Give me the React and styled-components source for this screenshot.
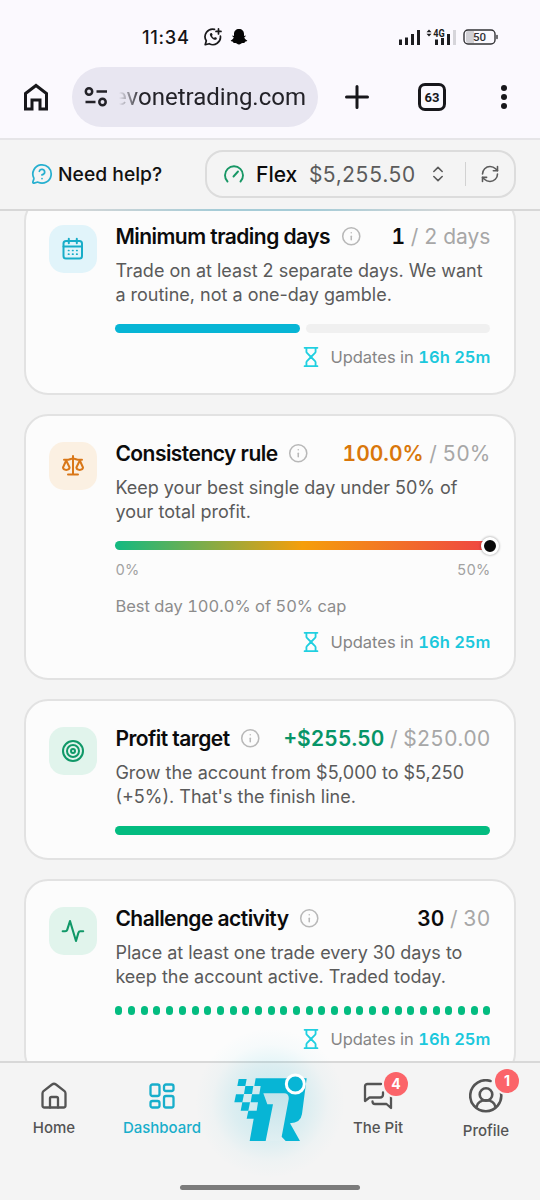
import React from 'react';
import styled, { createGlobalStyle } from 'styled-components';
import { ChevronsUpDown, RefreshCw, Info, Hourglass, MessageCircleQuestionMark } from 'lucide-react';

const Global = createGlobalStyle`
  * { box-sizing: border-box; }
  body { margin: 0; background: #f4f4f4; font-family: Inter, "Liberation Sans", sans-serif; color: #09090b; }
  svg { display: block; flex: none; }
`;

const Screen = styled.div`
  width: 540px; height: 1200px; display: flex; flex-direction: column;
  overflow: hidden; background: #f4f4f4;
`;

/* Phone status bar and browser toolbar */
const BrowserChrome = styled.div`
  height: 140px; flex: none; background: #fbf9fe; border-bottom: 2px solid #e6e5e8;
`;
const StatusBar = styled.div`
  height: 67px; padding: 6px 42px 0 142px; display: flex; align-items: center;
`;
const Clock = styled.span`
  font-size: 18.3px; font-weight: 450; letter-spacing: 0.7px; width: 62px; color: #151517;
`;
const StatusIcons = styled.div`display: flex; gap: 8px; align-items: center;`;
const Signals = styled.div`margin-left: auto; display: flex; align-items: center; gap: 1px;`;
const Toolbar = styled.div`
  height: 60px; display: flex; align-items: center; padding: 0 32px 0 23px;
`;
const AddressBar = styled.div`
  width: 246px; height: 60px; margin-left: 23px; padding-left: 12px; border-radius: 30px;
  background: #e8e6f1; display: flex; align-items: center; gap: 5px;
`;
const Address = styled.span`
  width: 193px; flex: none; display: flex; justify-content: flex-end; white-space: nowrap;
  font: 400 24px/36px Roboto, sans-serif; color: #232228;
  -webkit-mask-image: linear-gradient(90deg, transparent 6px, #000 28px);
  mask-image: linear-gradient(90deg, transparent 6px, #000 28px);
`;
const Tabs = styled.div`
  width: 28px; height: 28px; margin-left: 48px; border: 3px solid #17171b; border-radius: 7px;
  display: grid; place-items: center; font: 700 13px/1 Roboto, sans-serif; color: #17171b;
`;
const MenuDots = styled.div`
  margin-left: auto; display: grid; gap: 3px; padding-right: 1px;
  i { width: 6px; height: 6px; border-radius: 50%; background: #17171b; }
`;

/* App header */
const Header = styled.header`
  height: 71px; flex: none; display: flex; align-items: center; padding: 0 24px 1px 31px;
  background: #f4f4f4; position: relative;
  border-bottom: 2px solid; border-image: linear-gradient(90deg, #d7d7d7 12%, #a6ccd7 40%, #a6ccd7 58%, #d7d7d7 85%) 1;
`;
const Help = styled.div`
  display: flex; align-items: center; gap: 5px; font-size: 19.3px; font-weight: 500; color: #111;
`;
const AccountPill = styled.div`
  width: 311px; height: 48px; margin-left: auto; padding: 0 14px 0 16px;
  border: 2px solid #dcdcdc; border-radius: 18px; display: flex; align-items: center;
  font-size: 21px; color: #5b5b5b;
`;
const AccountName = styled.span`width: 41px; font-weight: 500; color: #0b0b0c; margin: 0 12px 0 11px;`;
const Balance = styled.span`
  width: 106px; font-variant-numeric: tabular-nums; margin-right: 13px;
`;
const Divider = styled.span`width: 1px; height: 24px; flex: none; background: #d2d2d2; margin: 0 14px 0 17px;`;

/* Rule cards */
const Main = styled.main`height: 850px; flex: none; overflow: hidden;`;
const CardList = styled.div`
  margin-top: -14px; padding: 0 24px; display: flex; flex-direction: column; gap: 19px;
`;
const Card = styled.section`
  display: flex; gap: 18px; padding: 23px 23.6px 23px 23.4px; border: 2px solid #e2e2e2; border-radius: 24px;
  background: #fcfcfc;
`;
const IconTile = styled.div`
  width: 48px; height: 48px; margin-top: 3px; flex: none; border-radius: 15px;
  display: grid; place-items: center; background: ${p => p.$bg}; color: ${p => p.$fg};
`;
const Body = styled.div`flex: 1; min-width: 0;`;
const Head = styled.div`height: 28px; display: flex; align-items: center; white-space: nowrap;`;
const Title = styled.h2`
  margin: 0 10.6px 0 0; font-size: 21px; font-weight: 600; letter-spacing: -0.535px; color: #0b0b0c;
`;
const Value = styled.div`
  margin-left: auto; font-size: 21px; font-variant-numeric: tabular-nums; color: #a7a7a7;
  b { font-weight: 600; color: ${p => p.$color}; }
`;
const Description = styled.p`
  margin: 9px 0 0; font-size: 18px; line-height: 24px; color: #5a5a5a; white-space: pre-line;
`;
const Track = styled.div`
  height: 9px; margin-top: 17px; display: flex; gap: 6px;
`;
const Segment = styled.span`flex: 1; border-radius: 5px; background: ${p => p.$color};`;
const Dots = styled(Track)`
  gap: 0; justify-content: space-between;
  i { width: 7px; border-radius: 3.5px; background: #03bc80; }
`;
const Gradient = styled(Track)`
  border-radius: 5px; justify-content: flex-end; align-items: center;
  background: linear-gradient(90deg, #12b981, #f59e0b 50%, #ef4444);
`;
const Knob = styled.span`
  width: 18px; height: 18px; margin-right: -9px; flex: none; border: 3px solid #fff; border-radius: 50%;
  background: #0a0a0a; box-shadow: 0 0 2px 1px rgba(0,0,0,.2);
`;
const Scale = styled.div`
  margin-top: 9px; height: 22px; padding-bottom: 2px; display: flex; justify-content: space-between; align-items: center;
  font-size: 14.5px; color: #a2a2a2; font-variant-numeric: tabular-nums; letter-spacing: 0.1px;
`;
const Note = styled.div`
  margin-top: 15px; height: 20px; padding-bottom: 1px; display: flex; align-items: center;
  font-size: 16.5px; color: #8c8c8c; font-variant-numeric: tabular-nums;
`;
const Updates = styled.div`
  margin-top: ${p => p.$gap || 12}px; height: 25px; padding-bottom: 2px; display: flex; align-items: center; justify-content: flex-end;
  font-size: 16.5px; color: #858585; white-space: pre; font-variant-numeric: tabular-nums;
  svg { margin: 1px 8px 0 0; color: #20cfe0; }
  b { font-weight: 600; color: #1bc8dc; }
`;

/* Bottom navigation */
const Nav = styled.nav`
  height: 139px; flex: none; position: relative; border-top: 2px solid #d8d8d8;
  background: #f4f4f4;
`;
const NavRow = styled.div`display: grid; grid-template-columns: repeat(5, 108px); position: relative;`;
const NavItem = styled.div`
  display: flex; flex-direction: column; align-items: center; padding-top: ${p => p.$top || 19}px; gap: 7px;
  font-size: 15px; line-height: 22px; font-weight: 500; color: ${p => p.$active ? '#18aecb' : '#545454'};
`;
const NavIcon = styled.div`position: relative;`;
const Badge = styled.span`
  position: absolute; left: ${p => p.$x}px; top: ${p => p.$y}px; width: 24px; height: 24px; border-radius: 50%;
  display: grid; place-items: center; background: #fb6469; color: #fff; font-size: 14px; font-weight: 700; line-height: 1;
  box-shadow: 0 0 0 2px #f4f4f4;
`;
const LogoButton = styled.div`
  position: absolute; left: 210px; top: -23px; width: 130px; height: 120px;
`;
const Glow = styled.div`
  position: absolute; left: 195px; top: -35px; width: 150px; height: 150px; border-radius: 50%;
  background: radial-gradient(closest-side, rgba(8,182,214,.2), rgba(8,182,214,.1) 50%, rgba(8,182,214,.025) 78%, transparent);
`;
const HomeBar = styled.div`
  width: 180px; height: 5px; border-radius: 3px; background: #7b7b7b;
  position: absolute; left: 180px; bottom: 10px;
`;

const Svg = ({ w = 24, h = w, sw = 1.8, children, ...rest }) => (
  <svg width={w} height={h} viewBox={`0 0 ${w} ${h}`} fill="none" stroke="currentColor" strokeWidth={sw}
    strokeLinecap="round" strokeLinejoin="round" {...rest}>{children}</svg>
);

const CalendarIcon = () => (
  <Svg sw={2}><rect x="2.5" y="4" width="18.5" height="17.5" rx="2.5" /><path d="M2.500 9.500h18.500M7.800 1.700v4.500M15.800 1.700v4.500" />
    <path d="M7.500 13.500h.4M11.600 13.500h.4M15.700 13.500h.4M7.500 17.200h.4M11.600 17.200h.4M15.700 17.200h.4" strokeWidth="1.700" /></Svg>
);
const ScalesIcon = () => (
  <Svg sw={2}><path d="M12 2v18M7 20.500h10M3 5.800h3c2 0 4-1.200 6-1.200s4 1.200 6 1.200h3" />
    <path d="M5.200 6.500 2 13.500c.3 3.200 6.300 3.200 6.600 0zM18.800 6.500 15.400 13.500c.3 3.200 6.300 3.200 6.600 0z" /></Svg>
);
const TargetIcon = () => (
  <Svg sw={2}><circle cx="12" cy="12" r="10" /><circle cx="12" cy="12" r="6" /><circle cx="12" cy="12" r="2" /></Svg>
);
const PulseIcon = () => (
  <Svg sw={2.1}><path d="M1.700 12.300h2.500c1.200 0 1.700-.4 2-1.400L9 2l6 20 2.400-8.300c.3-1 .9-1.400 1.900-1.400h2.900" /></Svg>
);

const InfoIcon = () => <Info size={20.5} strokeWidth={1.8} color="#b8b8b8" />;
const Countdown = ({ gap }) => (
  <Updates $gap={gap}><Hourglass size={22} strokeWidth={2} /><span>Updates in </span><b>16h 25m</b></Updates>
);

function Rule({ icon, bg, fg, title, value, total, color, text, children }) {
  return (
    <Card>
      <IconTile $bg={bg} $fg={fg}>{icon}</IconTile>
      <Body>
        <Head><Title>{title}</Title><InfoIcon /><Value $color={color}><b>{value}</b> / {total}</Value></Head>
        <Description>{text}</Description>
        {children}
      </Body>
    </Card>
  );
}

export default function App() {
  return (
    <Screen>
      <Global />
      <BrowserChrome>
        <StatusBar>
          <Clock>11:34</Clock>
          <StatusIcons>
            <Svg w={18} sw={1.7} color="#19191b">
              <path d="M10.500 1.300A7.600 7.600 0 0 0 2.300 12.800L1.200 16.700l4-1A7.600 7.600 0 0 0 16.400 8" />
              <path d="M6 5.500c-1 2.500 3.600 7.200 6.200 6.200l.8-1.700-2-1-1 .9c-1-.5-1.700-1.200-2.100-2.100l.8-.9-.9-2z" fill="currentColor" stroke="none" />
              <path d="M14.500.9v5M12 3.400h5" />
            </Svg>
            <Svg w={18} h={18} color="#050505">
              <path fill="currentColor" stroke="none" d="M9 1C6 1 4 3 4 6v2L2.500 7.600c-.8.4.2 1.300 1.200 1.700C3.300 11 2 12 .8 12.500c-.3.8 1.200 1.100 2.200 1.300.3 1.200.8 1.300 2.500 1.100C6.700 15 7.400 16.500 9 16.500s2.300-1.500 3.500-1.600c1.700.2 2.200.1 2.500-1.100 1-.2 2.500-.5 2.200-1.300C16 12 14.700 11 14.300 9.300c1-.4 2-1.300 1.200-1.700L14 8V6c0-3-2-5-5-5z" />
            </Svg>
          </StatusIcons>
          <Signals>
            <Svg w={64} h={20} color="#1d1d20">
              <g stroke="none" fill="currentColor">
                <path d="M1 12.500h3v5.500H1zM7 10.500h3V18H7zM13 7h3v11h-3zM19 3h3v15h-3z" />
                <path d="M28.500 5.200l2.500-2.800 2.500 2.800zM28.500 6.800h5l-2.500 2.800z" />
                <path d="M37 12.500h3V18h-3zM43 11h3v7h-3zM49 7h3v11h-3z" />
                <path d="M55 3h3v15h-3z" fill="#d6d5da" />
                <text x="35.300" y="10" fontFamily="Roboto" fontSize="10.500" fontWeight="700" textLength="11.500" lengthAdjust="spacingAndGlyphs">4G</text>
              </g>
            </Svg>
            <Svg w={35} h={18} sw={1.4} color="#333336">
              <path d="M5 3h6v12H5a2 2 0 0 1-2-2V5a2 2 0 0 1 2-2z" fill="#d1d0d5" stroke="none" />
              <rect x="1" y="2" width="31" height="14" rx="4" /><path d="M34 7.500v3" />
              <text x="16.500" y="13" textAnchor="middle" fontFamily="Roboto" fontSize="11.500" fontWeight="500" fill="#333336" stroke="none">50</text>
            </Svg>
          </Signals>
        </StatusBar>
        <Toolbar>
          <Svg w={26} h={28} sw={3} color="#17171b" strokeLinejoin="miter"><path d="M2.500 10.500 13 2.500l10.500 8V26H17v-9H9v9H2.500z" /></Svg>
          <AddressBar>
            <Svg w={24} h={22} sw={2.5} color="#232228" strokeLinecap="butt">
              <circle cx="5" cy="5.500" r="3.200" /><path d="M12.500 5.500H23M1.500 16h10" /><circle cx="18.500" cy="16" r="3.200" />
            </Svg>
            <Address>evonetrading.com</Address>
          </AddressBar>
          <Svg w={26} sw={3} color="#17171b" style={{ marginLeft: 26 }}><path d="M2.500 13h21M13 2.500v21" /></Svg>
          <Tabs>63</Tabs>
          <MenuDots><i /><i /><i /></MenuDots>
        </Toolbar>
      </BrowserChrome>

      <Header>
        <Help><MessageCircleQuestionMark size={22} strokeWidth={1.9} color="#26afcf" />Need help?</Help>
        <AccountPill>
          <Svg w={22} sw={1.9} color="#189765"><path d="M4.500 18.500a9 9 0 1 1 13 0M10.500 13.500l4.500-5" /></Svg>
          <AccountName>Flex</AccountName><Balance>$5,255.50</Balance>
          <ChevronsUpDown size={20} strokeWidth={1.9} /><Divider /><RefreshCw size={20} strokeWidth={1.9} />
        </AccountPill>
      </Header>

      <Main>
        <CardList>
          <Rule icon={<CalendarIcon />} bg="#e1f4fa" fg="#18adc8" title="Minimum trading days" value="1" total="2 days"
            color="#0b0b0c" text={'Trade on at least 2 separate days. We want\na routine, not a one-day gamble.'}>
            <Track><Segment $color="#07b5d5" /><Segment $color="#f0f0f0" /></Track>
            <Countdown />
          </Rule>
          <Rule icon={<ScalesIcon />} bg="#fbf0e2" fg="#d97718" title="Consistency rule" value="100.0%" total="50%"
            color="#d9770b" text={'Keep your best single day under 50% of\nyour total profit.'}>
            <Gradient><Knob /></Gradient>
            <Scale><span>0%</span><span>50%</span></Scale>
            <Note>Best day 100.0% of 50% cap</Note>
            <Countdown gap={14} />
          </Rule>
          <Rule icon={<TargetIcon />} bg="#e1f4ec" fg="#109868" title="Profit target" value="+$255.50" total="$250.00"
            color="#079568" text={"Grow the account from $5,000 to $5,250\n(+5%). That's the finish line."}>
            <Track><Segment $color="#03bc80" /></Track>
          </Rule>
          <Rule icon={<PulseIcon />} bg="#e1f4ec" fg="#109868" title="Challenge activity" value="30" total="30"
            color="#0b0b0c" text={'Place at least one trade every 30 days to\nkeep the account active. Traded today.'}>
            <Dots>{Array.from({ length: 30 }, (_, i) => <i key={i} />)}</Dots>
            <Countdown />
          </Rule>
        </CardList>
      </Main>

      <Nav>
        <Glow />
        <NavRow>
          <NavItem>
            <Svg w={28} sw={2.3}><path d="M2.500 11.500c0-1 .3-1.700 1-2.300L12 2.500c1.400-1 2.600-1 4 0l8.500 6.700c.7.600 1 1.300 1 2.300V23.500c0 1.200-.8 2-2 2h-19c-1.200 0-2-.8-2-2z" /><path d="M10 25.500V16.500c0-1 .6-1.500 1.500-1.500h5c.9 0 1.500.500 1.500 1.500v9" /></Svg>
            <span>Home</span>
          </NavItem>
          <NavItem $active>
            <Svg w={28} sw={2.3}><rect x="2.500" y="2.500" width="9" height="11.500" rx="2" /><rect x="16" y="2.500" width="9.500" height="6.500" rx="2" /><rect x="2.500" y="19" width="9" height="6.500" rx="2" /><rect x="16" y="14" width="9.500" height="11.500" rx="2" /></Svg>
            <span>Dashboard</span>
          </NavItem>
          <span />
          <NavItem>
            <NavIcon>
              <Svg w={30} h={28} sw={2.3}><path d="M18 2H4.500C3 2 2 2.800 2 4.300V19l4.500-3.500H17c2 0 3-1 3-3v-2M9.500 19.500c0 1.800 1 2.500 2.500 2.500h11.500l4.500 4V13" /></Svg>
              <Badge $x={21} $y={-10}>4</Badge>
            </NavIcon>
            <span>The Pit</span>
          </NavItem>
          <NavItem $top={16}>
            <NavIcon>
              <Svg w={34} sw={2.6}><path d="M21.500 2A15.500 15.500 0 1 0 32 14M7.500 28c1.500-9 17.500-9 19 0" /><circle cx="17" cy="15.500" r="6.300" /></Svg>
              <Badge $x={26} $y={-10}>1</Badge>
            </NavIcon>
            <span>Profile</span>
          </NavItem>
        </NavRow>
        <LogoButton>
          <svg width="130" height="120" viewBox="0 0 390 360" fill="#07b5d5">
            <defs><linearGradient id="numeral" x2="0" y2="1"><stop stopColor="#c3e3ea" /><stop offset="1" stopColor="#e0eff2" /></linearGradient></defs>
            <path d="M160 160h62q16 0 14 18l-21 112 12 13h-60l22-110h-17z" fill="url(#numeral)" />
            <path d="M137 115H290L276 222q-4 27-36 28l30 53h-43l-12-13 21-112q2-18-14-18H160l12 33h17l-22 110h-48l12-67h-21l5-24h25l4-25h-22l4-24h22l4-25h-19z" />
            <path d="M86 117h24l-4 21H82zM106 138h24l-4 24h-24zM78 163h24l-5 24H73zM97 187h23l-5 25H92z" />
            <circle cx="256" cy="132" r="27" stroke="#fff" strokeWidth="9" />
          </svg>
        </LogoButton>
        <HomeBar />
      </Nav>
    </Screen>
  );
}
